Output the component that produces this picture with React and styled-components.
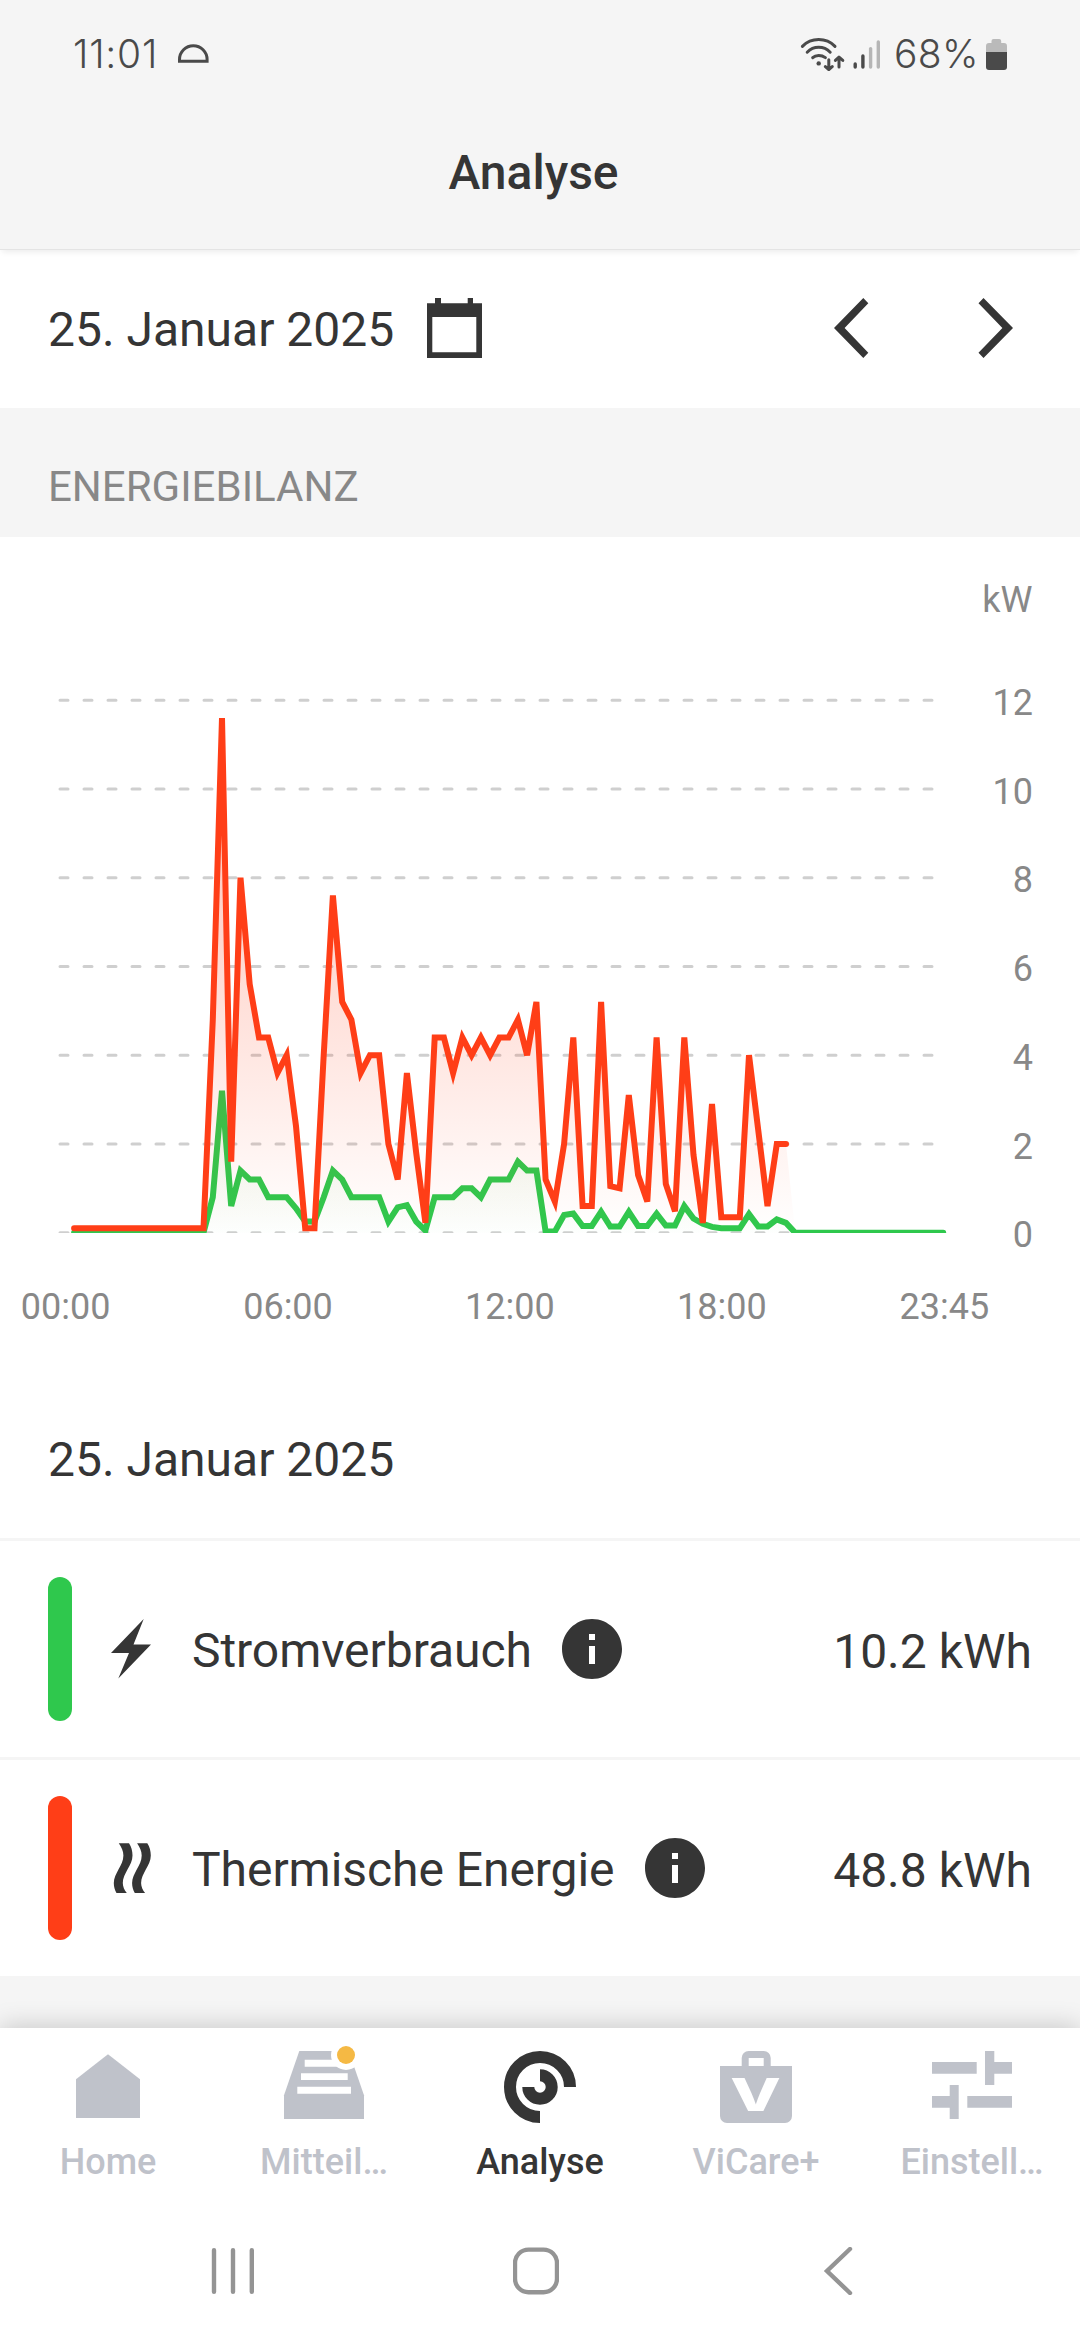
import React from "react";
import styled, { createGlobalStyle } from "styled-components";
import { MdInfo } from "react-icons/md";

const GREEN = "#2fc84d";
const RED = "#ff3e17";

// quarter-hour values in kW
const power = [
    0, 0, 0, 0, 0, 0, 0, 0, 0, 0, 0, 0, 0, 0, 0, 0.8, 3.2, 0.6, 1.4, 1.2, 1.2,
    0.8, 0.8, 0.8, 0.55, 0.25, 0.25, 0.8, 1.4, 1.2, 0.8, 0.8, 0.8, 0.8, 0.25,
    0.57, 0.62, 0.25, 0.05, 0.8, 0.8, 0.8, 1, 1, 0.8, 1.2, 1.2, 1.2, 1.6, 1.4,
    1.4, 0.03, 0.03, 0.4, 0.43, 0.15, 0.15, 0.47, 0.14, 0.14, 0.47, 0.15, 0.15,
    0.43, 0.16, 0.16, 0.6, 0.32, 0.2, 0.13, 0.1, 0.1, 0.1, 0.42, 0.14, 0.14,
    0.3, 0.22, 0, 0, 0, 0, 0, 0, 0, 0, 0, 0, 0, 0, 0, 0, 0, 0, 0,
];

const heat = [
    0.1, 0.1, 0.1, 0.1, 0.1, 0.1, 0.1, 0.1, 0.1, 0.1, 0.1, 0.1, 0.1, 0.1, 0.1,
    4.8, 11.6, 1.6, 8, 5.6, 4.4, 4.4, 3.6, 4, 2.4, 0.1, 0.1, 4, 7.6, 5.2, 4.8,
    3.6, 4, 4, 2, 1.2, 3.6, 1.8, 0.22, 4.4, 4.4, 3.6, 4.4, 4, 4.4, 4, 4.4, 4.4,
    4.8, 4, 5.2, 1.2, 0.7, 2, 4.4, 0.6, 0.6, 5.2, 1.05, 1, 3.1, 1.3, 0.7, 4.4,
    1.1, 0.48, 4.4, 1.75, 0.22, 2.9, 0.35, 0.35, 0.35, 4, 2.3, 0.6, 2, 2,
];

const BASE = 695.7;
const px = (i) => 74.06 + i * 9.246;
const py = (v) => BASE - v * 44.375;
const toLine = (data) => data.map((v, i) => `${px(i).toFixed(1)},${py(v).toFixed(1)}`).join(" ");
const toArea = (data) => `${px(0)},${BASE} ${toLine(data)} ${px(data.length)},${BASE}`;

const hours = [
    { x: 65.7, label: "00:00" },
    { x: 288, label: "06:00" },
    { x: 509.8, label: "12:00" },
    { x: 721.8, label: "18:00" },
    { x: 944.3, label: "23:45" },
];

function EnergyChart() {
    return (
        <Chart viewBox="0 0 1080 844">
            <defs>
                <linearGradient id="heatFill" gradientUnits="userSpaceOnUse" x1="0" y1="181" x2="0" y2={BASE}>
                    <stop offset="0" stopColor={RED} stopOpacity="0.36" />
                    <stop offset="1" stopColor={RED} stopOpacity="0" />
                </linearGradient>
                <linearGradient id="powerFill" gradientUnits="userSpaceOnUse" x1="0" y1="553" x2="0" y2={BASE}>
                    <stop offset="0" stopColor={GREEN} stopOpacity="0.1" />
                    <stop offset="1" stopColor={GREEN} stopOpacity="0.01" />
                </linearGradient>
                <clipPath id="plot">
                    <rect x="0" y="0" width="1080" height="695.9" />
                </clipPath>
            </defs>
            <AxisLabel x="1032.5" y="74.7" textAnchor="end">kW</AxisLabel>
            {[12, 10, 8, 6, 4, 2, 0].map((v) => (
                <AxisLabel key={v} x="1033" y={py(v) + 14.7} textAnchor="end">{v}</AxisLabel>
            ))}
            <g clipPath="url(#plot)">
                {[12, 10, 8, 6, 4, 2, 0].map((v) => (
                    <GridLine key={v} x1="60" x2="932" y1={py(v)} y2={py(v)} />
                ))}
                <polygon points={toArea(power)} fill="url(#powerFill)" />
                <Series points={toLine(power)} stroke={GREEN} />
                <polygon points={toArea(heat)} fill="url(#heatFill)" />
                <Series points={toLine(heat)} stroke={RED} />
            </g>
            {hours.map((h) => (
                <AxisLabel key={h.label} x={h.x} y="782" textAnchor="middle">{h.label}</AxisLabel>
            ))}
        </Chart>
    );
}

function BoltIcon() {
    return (
        <RowIcon viewBox="0 0 72 72">
            <path d="M47.7 6 37.5 31.5H55L22.3 65.6 33 40H15Z" />
        </RowIcon>
    );
}

function HeatIcon() {
    const wave =
        "M22.8 11.2H33C35.4 14.8 36.5 19 36.5 23.4 36.5 33.5 26.8 41 26.8 51 26.8 54.5 28.3 58 30.8 61H20.5C18.8 58 17.8 54.6 17.8 51 17.8 41 27.4 33.5 27.4 23.4 27.4 19 25.5 15 22.8 11.2Z";
    return (
        <RowIcon viewBox="0 0 72 72">
            <path d={wave} />
            <path d={wave} transform="translate(18.3 0)" />
        </RowIcon>
    );
}

function HomeIcon() {
    return (
        <TabIcon viewBox="0 0 96 72">
            <path d="M48 3.3 80 28.3V67H16V28.3Z" />
        </TabIcon>
    );
}

function InboxIcon() {
    return (
        <TabIcon viewBox="0 0 96 72">
            <path d="M23.3 0H72.7L88 44.3V68H8V44.3Z" />
            <path fill="#fff" d="M28.7 8.7H68V15.7H28.7ZM25 22.3H71.7V29H25ZM21.3 35.7H75V42.7H21.3Z" />
            <circle cx="70" cy="4" r="15" fill="#fff" />
            <circle cx="70" cy="4" r="9" fill="#f5b944" />
        </TabIcon>
    );
}

function AnalyseIcon() {
    return (
        <TabIcon viewBox="0 0 96 72">
            <g fill="none" stroke="currentColor" strokeWidth="12">
                <path d="M48 66A30 30 0 1 1 78 36" />
                <path d="M48 24.3A11.7 11.7 0 1 1 36.3 36" />
            </g>
        </TabIcon>
    );
}

function PlusIcon() {
    return (
        <TabIcon viewBox="0 0 96 72">
            <path fillRule="evenodd" d="M12 15H33.7V7A7 7 0 0 1 40.7 0H55.7A7 7 0 0 1 62.7 7V15H84V65A7 7 0 0 1 77 72H19A7 7 0 0 1 12 65ZM40.7 7V15H55.7V7Z" />
            <BagLetter x="22.2" y="60" textLength="50.6" lengthAdjust="spacingAndGlyphs">V</BagLetter>
        </TabIcon>
    );
}

function SettingsIcon() {
    return (
        <TabIcon viewBox="0 0 96 72">
            <path d="M8 11H52.7V22.7H8ZM61 0H70.3V11H88V22.7H70.3V34H61ZM8 45H25.7V34H34.7V68H25.7V56.7H8ZM43.3 45H88V56.7H43.3Z" />
        </TabIcon>
    );
}

const tabs = [
    { label: "Home", Icon: HomeIcon },
    { label: "Mitteil…", Icon: InboxIcon },
    { label: "Analyse", Icon: AnalyseIcon, active: true },
    { label: "ViCare+", Icon: PlusIcon },
    { label: "Einstell…", Icon: SettingsIcon },
];

function App() {
    return (
        <Screen>
            <GlobalStyle />
            <StatusBar>
                <Clock>11:01</Clock>
                <svg width="32" height="20" viewBox="0 0 32 20">
                    <path d="M2.5 17.3V15.5A13.8 13.8 0 0 1 30.1 15.5V17.3Z" fill="none" stroke="#4a4a4a" strokeWidth="3" />
                </svg>
                <Spacer />
                <svg width="92" height="34" viewBox="0 0 92 34">
                    <g fill="none" stroke="#4a4a4a" strokeWidth="3" strokeLinecap="round" strokeLinejoin="round">
                        <path d="M2.4 9.4Q9 2.6 18.7 2.6T35 9.4" />
                        <path d="M7.2 15.2Q12 10.3 18.7 10.3T30.2 15.2" />
                        <path d="M12.7 20.6Q15 18.4 18.7 18.4T25.4 20.6" />
                        <path d="M28.8 22.8V32M25.4 29.6 28.8 32.6 32.2 29.6" />
                        <path d="M39 30V20.6M35.4 23.4 39 20 42.8 23.4" />
                    </g>
                    <circle cx="18.7" cy="26.4" r="2.2" fill="#4a4a4a" />
                    <g strokeWidth="3.4" strokeLinecap="round">
                        <path d="M55.2 30V27M62.9 30V19" stroke="#4a4a4a" />
                        <path d="M70.6 30V11.6M78.3 30V5" stroke="#b5b5b5" />
                    </g>
                </svg>
                <Percent>68%</Percent>
                <svg width="21" height="31" viewBox="0 0 21 31">
                    <path d="M5.5 4V2A2 2 0 0 1 7.5 0H13.2A2 2 0 0 1 15.2 2V4H18A3 3 0 0 1 21 7V13H0V7A3 3 0 0 1 3 4Z" fill="#bababa" />
                    <path d="M0 13H21V28A3 3 0 0 1 18 31H3A3 3 0 0 1 0 28Z" fill="#4a4a4a" />
                </svg>
            </StatusBar>
            <Header>
                <Title>Analyse</Title>
            </Header>

            <DatePicker>
                <DateText>25. Januar 2025</DateText>
                <svg width="55" height="60" viewBox="0 0 55 60">
                    <path fill="#353535" fillRule="evenodd" d="M8 0H14V5.3H40.7V0H46V5.3H55V60H0V5.3H8ZM5.3 19V54.3H49.3V19Z" />
                </svg>
                <Spacer />
                <Arrows>
                    <svg width="35" height="60" viewBox="0 0 35 60">
                        <path fill="#353535" d="M0 30 29.3 0 34.3 5.2 10.6 30 34.3 54.8 29.3 60Z" />
                    </svg>
                    <svg width="35" height="60" viewBox="0 0 35 60">
                        <path fill="#353535" d="M35 30 5.5 0 .5 5.2 24.4 30 .5 54.8 5.5 60Z" />
                    </svg>
                </Arrows>
            </DatePicker>

            <SectionHeading>ENERGIEBILANZ</SectionHeading>
            <EnergyChart />

            <SummaryDate>25. Januar 2025</SummaryDate>
            <Row>
                <Marker color={GREEN} />
                <BoltIcon />
                <RowLabel>Stromverbrauch</RowLabel>
                <InfoIcon />
                <Spacer />
                <Value>10.2 kWh</Value>
            </Row>
            <Row>
                <Marker color={RED} />
                <HeatIcon />
                <RowLabel>Thermische Energie</RowLabel>
                <InfoIcon />
                <Spacer />
                <Value>48.8 kWh</Value>
            </Row>

            <Spacer />
            <TabBar>
                {tabs.map(({ label, Icon, active }) => (
                    <Tab key={label} $active={active}>
                        <Icon />
                        <TabLabel>{label}</TabLabel>
                    </Tab>
                ))}
            </TabBar>
            <SystemNav>
                <NavIcon viewBox="0 0 46 48">
                    <path d="M4 3.2V44.8M23 3.2V44.8M41.8 3.2V44.8" />
                </NavIcon>
                <NavIcon viewBox="0 0 46 48">
                    <rect x="2" y="2.6" width="42" height="42.6" rx="13.5" />
                </NavIcon>
                <NavIcon viewBox="0 0 46 48">
                    <path d="M35 2 12 24 35 46" />
                </NavIcon>
            </SystemNav>
        </Screen>
    );
}

export default App;

const GlobalStyle = createGlobalStyle`
    * {
        box-sizing: border-box;
    }

    body {
        margin: 0;
        background: #f5f5f5;
        font-family: Roboto, "Liberation Sans", sans-serif;
        color: #353535;
    }

    svg {
        display: block;
        flex: none;
    }
`;

const Screen = styled.div`
    width: 1080px;
    height: 2340px;
    display: flex;
    flex-direction: column;
    overflow: hidden;
    background: #f5f5f5;
`;

const Spacer = styled.div`
    flex: 1;
`;

const StatusBar = styled.div`
    height: 108px;
    display: flex;
    align-items: center;
    padding: 0 73px 0 73px;
    flex: none;
`;

const StatusText = styled.span`
    flex: none;
    font-family: Inter, Roboto, sans-serif;
    font-weight: 350;
    font-size: 39px;
    line-height: 48px;
    color: #4a4a4a;
`;

const Clock = styled(StatusText)`
    width: 104px;
    letter-spacing: 0.8px;
`;

const Percent = styled(StatusText)`
    width: 94px;
    letter-spacing: 0.3px;
    padding-left: 2px;
`;

const Header = styled.header`
    height: 142px;
    flex: none;
    display: flex;
    align-items: center;
    justify-content: center;
    padding: 0 13px 12px 0;
    border-bottom: 1px solid #e4e4e4;
    box-shadow: 0 4px 6px -2px rgba(0, 0, 0, 0.08);
    position: relative;
    z-index: 1;
`;

const Title = styled.h1`
    margin: 0;
    font-size: 48px;
    font-weight: 500;
    line-height: 56px;
`;

const DatePicker = styled.div`
    height: 158px;
    flex: none;
    display: flex;
    align-items: center;
    padding: 0 67px 2px 48px;
    background: #fff;
`;

const DateText = styled.span`
    width: 379px;
    padding-top: 3px;
    font-size: 48px;
    line-height: 56px;
`;

const Arrows = styled.div`
    display: flex;
    gap: 109px;
`;

const SectionHeading = styled.h2`
    height: 129px;
    flex: none;
    margin: 0;
    padding: 28px 48px 0;
    font-size: 42px;
    font-weight: 400;
    line-height: 101px;
    color: #888;
`;

const Chart = styled.svg`
    width: 1080px;
    height: 844px;
    background: #fff;
`;

const AxisLabel = styled.text`
    font-size: 36px;
    fill: #888;
`;

const GridLine = styled.line`
    stroke: #cfcfcf;
    stroke-width: 3;
    stroke-linecap: round;
    stroke-dasharray: 8 16;
`;

const Series = styled.polyline`
    fill: none;
    stroke-width: 6;
    stroke-linecap: round;
    stroke-miterlimit: 4;
`;

const SummaryDate = styled.div`
    height: 157px;
    flex: none;
    padding: 0 48px;
    font-size: 48px;
    line-height: 157px;
    background: #fff;
`;

const Row = styled.div`
    height: 219px;
    flex: none;
    display: flex;
    align-items: center;
    padding: 0 48px;
    border-top: 3px solid #f5f5f5;
    background: #fff;
`;

const Marker = styled.div`
    width: 24px;
    height: 144px;
    border-radius: 12px;
    background: ${(props) => props.color};
`;

const RowIcon = styled.svg`
    width: 72px;
    height: 72px;
    margin: 0 24px;
    fill: #353535;
`;

const RowLabel = styled.span`
    padding-top: 4px;
    font-size: 48px;
    line-height: 56px;
    letter-spacing: -0.05px;
`;

const InfoIcon = styled(MdInfo)`
    width: 72px;
    height: 72px;
    margin-left: 24px;
`;

const Value = styled.span`
    padding-top: 5px;
    font-size: 48px;
    line-height: 56px;
`;

const TabBar = styled.nav`
    height: 162px;
    flex: none;
    display: grid;
    grid-template-columns: repeat(5, 1fr);
    padding-top: 23px;
    background: #fff;
    box-shadow: 0 -2px 24px rgba(0, 0, 0, 0.18);
`;

const Tab = styled.div`
    display: flex;
    flex-direction: column;
    align-items: center;
    color: ${(props) => (props.$active ? "#353535" : "#bfc2ca")};
`;

const TabIcon = styled.svg`
    width: 96px;
    height: 72px;
    fill: currentColor;
    overflow: visible;
`;

const BagLetter = styled.text`
    font-family: Inter, Roboto, sans-serif;
    font-size: 45.5px;
    font-weight: 800;
    fill: #fff;
`;

const TabLabel = styled.span`
    margin-top: 18px;
    font-size: 36px;
    font-weight: 500;
    line-height: 42px;
`;

const SystemNav = styled.div`
    height: 150px;
    flex: none;
    display: flex;
    align-items: center;
    justify-content: space-between;
    padding: 12px 219px 0 210px;
    background: #fff;
    position: relative;
`;

const NavIcon = styled.svg`
    width: 46px;
    height: 48px;
    fill: none;
    stroke: #949494;
    stroke-width: 4.4;
    stroke-linecap: round;
`;
